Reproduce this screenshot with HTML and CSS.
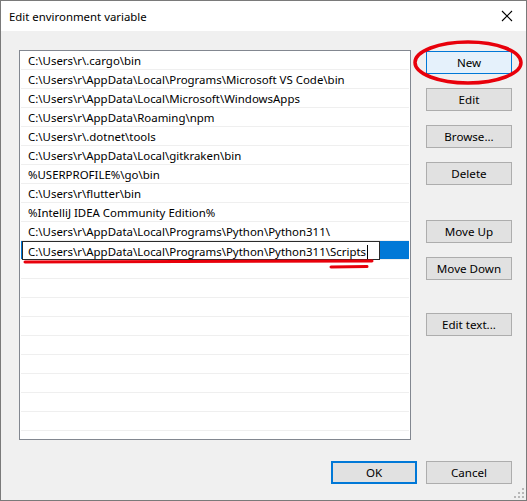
FILE: index.html
```html
<!DOCTYPE html>
<html>
<head>
<meta charset="utf-8">
<link rel="stylesheet" href="styles.css">
</head>
<body>
<div class="window">
  <div class="titlebar">
    <span class="title">Edit environment variable</span>
    <span class="close"><svg width="12" height="12" viewBox="0 0 12 12"><path d="M1 1 L11 11 M11 1 L1 11" stroke="#000" stroke-width="1.1" fill="none"/></svg></span>
  </div>
  <div class="content">
    <div class="main">
      <div class="list">
        <div class="row">C:\Users\r\.cargo\bin</div>
        <div class="row">C:\Users\r\AppData\Local\Programs\Microsoft VS Code\bin</div>
        <div class="row">C:\Users\r\AppData\Local\Microsoft\WindowsApps</div>
        <div class="row">C:\Users\r\AppData\Roaming\npm</div>
        <div class="row">C:\Users\r\.dotnet\tools</div>
        <div class="row">C:\Users\r\AppData\Local\gitkraken\bin</div>
        <div class="row">%USERPROFILE%\go\bin</div>
        <div class="row">C:\Users\r\flutter\bin</div>
        <div class="row">%IntelliJ IDEA Community Edition%</div>
        <div class="row">C:\Users\r\AppData\Local\Programs\Python\Python311\</div>
        <div class="row selected"><div class="editbox">C:\Users\r\AppData\Local\Programs\Python\Python311\Scripts<span class="caret"></span></div></div>
        <div class="row"></div>
        <div class="row"></div>
        <div class="row"></div>
        <div class="row"></div>
        <div class="row"></div>
        <div class="row"></div>
        <div class="row"></div>
        <div class="row"></div>
        <div class="row"></div>
        <div class="row"></div>
      </div>
      <div class="side">
        <button class="btn btn-new">New</button>
        <button class="btn gap-s">Edit</button>
        <button class="btn gap-s">Browse...</button>
        <button class="btn gap-s">Delete</button>
        <button class="btn gap-l">Move Up</button>
        <button class="btn gap-s">Move Down</button>
        <button class="btn gap-xl">Edit text...</button>
      </div>
    </div>
    <div class="footer">
      <button class="btn btn-ok">OK</button>
      <button class="btn">Cancel</button>
    </div>
  </div>
  <svg class="annot" width="527" height="501" viewBox="0 0 527 501">
    <ellipse cx="468" cy="62.5" rx="53" ry="20.5" fill="none" stroke="#e8000b" stroke-width="3.5"/>
    <path d="M25 262 L372 261" stroke="#e8000b" stroke-width="3" stroke-linecap="round" fill="none"/>
    <path d="M331 267 L367 266.5" stroke="#e8000b" stroke-width="3" stroke-linecap="round" fill="none"/>
  </svg>
  <svg class="grip" width="10" height="10" viewBox="0 0 10 10">
    <rect x="8" y="0" width="2" height="2" fill="#b8b8b8"/>
    <rect x="4" y="4" width="2" height="2" fill="#b8b8b8"/>
    <rect x="8" y="4" width="2" height="2" fill="#b8b8b8"/>
    <rect x="0" y="8" width="2" height="2" fill="#b8b8b8"/>
    <rect x="4" y="8" width="2" height="2" fill="#b8b8b8"/>
    <rect x="8" y="8" width="2" height="2" fill="#b8b8b8"/>
  </svg>
</div>
</body>
</html>
```
FILE: styles.css
```css
* { box-sizing: border-box; }
html, body { margin: 0; padding: 0; background: #f0f0f0; }
body {
  font-family: "Noto Sans", "Open Sans", "DejaVu Sans", sans-serif;
  font-size: 11.45px;
  color: #000;
}
.window {
  position: relative;
  width: 527px;
  height: 501px;
  border: 1px solid #7a7a7a;
  background: #f0f0f0;
  display: flex;
  flex-direction: column;
  overflow: hidden;
}
.titlebar {
  height: 30px;
  background: #fff;
  display: flex;
  align-items: center;
  justify-content: space-between;
  padding: 0 13px 0 8px;
  flex: none;
}
.title { font-size: 11.4px; color: #000; padding-top: 1px; }
.close { display: flex; align-items: center; }
.content {
  flex: 1;
  display: flex;
  flex-direction: column;
  padding: 19px 14px 16px 18px;
}
.main { display: flex; }
.list {
  width: 392px;
  height: 390px;
  background: #fff;
  border: 1px solid #828790;
  overflow: hidden;
  padding: 0 1px;
}
.row {
  height: 19px;
  line-height: 16px;
  padding-top: 2px;
  border-bottom: 1px solid #efefef;
  padding-left: 7px;
  white-space: nowrap;
}
.row.selected {
  background: #0078d7;
  padding: 0 0 0 1px;
  border-bottom-color: #efefef;
}
.editbox {
  width: 358px;
  height: 19px;
  background: #fff;
  border: 1px solid #2b2b2b;
  line-height: 15px;
  padding-top: 2px;
  padding-left: 5px;
  white-space: nowrap;
  overflow: hidden;
}
.caret {
  display: inline-block;
  width: 1px;
  height: 14px;
  background: #000;
  vertical-align: -3px;
  margin-left: 1px;
}
.side {
  display: flex;
  flex-direction: column;
  margin-left: 15px;
  padding-top: 1px;
}
.btn {
  width: 86px;
  height: 23px;
  background: #e1e1e1;
  border: 1px solid #adadad;
  font-family: inherit;
  font-size: 11.6px;
  color: #000;
  padding: 0;
  line-height: 19px;
}
.btn-new { background: #e5f1fb; border-color: #0078d7; }
.gap-s { margin-top: 14px; }
.gap-l { margin-top: 35px; }
.gap-xl { margin-top: 33px; }
.footer {
  margin-top: auto;
  display: flex;
  justify-content: flex-end;
  gap: 9px;
}
.btn-ok { border: 2px solid #0078d7; line-height: 17px; }
.annot {
  position: absolute;
  left: -1px;
  top: -1px;
  pointer-events: none;
}
.grip {
  position: absolute;
  right: 2px;
  bottom: 2px;
}
```
